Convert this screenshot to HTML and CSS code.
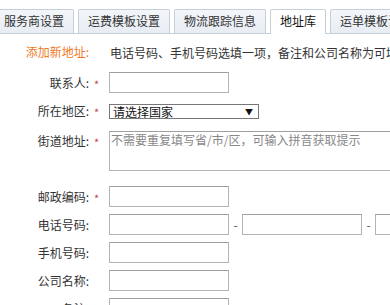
FILE: index.html
```html
<html>

  <head>
    <meta charset="utf-8">
    <link rel="stylesheet" href="styles.css">
  </head>

  <body>

  <div class="tabs">
    <div class="tab">服务商设置</div>
    <div class="tab">运费模板设置</div>
    <div class="tab">物流跟踪信息</div>
    <div class="tab active">地址库</div>
    <div class="tab">运单模板设置</div>
  </div>

  <div class="form">
    <div class="row head">
      <div class="label title">添加新地址:</div>
      <div class="star"></div>
      <div class="hint">电话号码、手机号码选填一项，备注和公司名称为可填项</div>
    </div>

    <div class="row">
      <div class="label">联系人:</div>
      <div class="star">*</div>
      <input class="text" type="text">
    </div>

    <div class="row region">
      <div class="label">所在地区:</div>
      <div class="star">*</div>
      <div class="select-wrap">
        <select class="country">
          <option>请选择国家</option>
        </select>
        <span class="arrow">▼</span>
      </div>
    </div>

    <div class="row street">
      <div class="label">街道地址:</div>
      <div class="star">*</div>
      <textarea class="area" placeholder="不需要重复填写省/市/区，可输入拼音获取提示"></textarea>
    </div>

    <div class="row postal">
      <div class="label">邮政编码:</div>
      <div class="star">*</div>
      <input class="text" type="text">
    </div>

    <div class="row">
      <div class="label">电话号码:</div>
      <div class="star"></div>
      <input class="text" type="text">
      <span class="dash">-</span>
      <input class="text" type="text">
      <span class="dash">-</span>
      <input class="text" type="text">
    </div>

    <div class="row">
      <div class="label">手机号码:</div>
      <div class="star"></div>
      <input class="text" type="text">
    </div>

    <div class="row">
      <div class="label">公司名称:</div>
      <div class="star"></div>
      <input class="text" type="text">
    </div>

    <div class="row">
      <div class="label">备注:</div>
      <div class="star"></div>
      <input class="text" type="text">
    </div>
  </div>

  </body>

</html>
```

FILE: styles.css
```css
  html, body {
    margin: 0;
    overflow: hidden;
    background-color: white;
  }

  body {
    font-family: "Noto Sans CJK SC", "Noto Sans", sans-serif;
    font-size: 12px;
    color: #333;
  }

  .tabs {
    display: flex;
    gap: 4px;
    margin: 9px 0 0 -6px;
    height: 24px;
    border-bottom: 1px solid #c6ced8;
    white-space: nowrap;
  }

  .tab {
    flex: none;
    height: 23px;
    line-height: 22px;
    padding: 0 9px;
    border: 1px solid #c6ced8;
    border-bottom: none;
    border-radius: 2px 2px 0 0;
    background-color: #edf2f7;
    background-image: linear-gradient(#f3f6fa, #e7edf4);
    color: #333;
  }

  .tab.active {
    height: 24px;
    background-color: white;
    background-image: none;
    color: #111;
  }

  .form {
    display: flex;
    flex-direction: column;
  }

  .row {
    display: flex;
    align-items: center;
    margin-top: 7px;
    white-space: nowrap;
  }

  .row.head {
    height: 18px;
    margin-top: 9px;
  }

  .row.head + .row {
    margin-top: 11px;
  }

  .row.region {
    margin-top: 9px;
  }

  .row.street {
    align-items: flex-start;
    margin-top: 11px;
  }

  .row.street .label {
    padding-top: 1px;
  }

  .row.postal {
    margin-top: 15px;
  }

  .label {
    flex: none;
    width: 89px;
    text-align: right;
    line-height: 18px;
  }

  .title {
    color: #ee7a1f;
  }

  .star {
    flex: none;
    width: 20px;
    box-sizing: border-box;
    padding: 3px 0 0 5px;
    color: #c0464b;
    font-size: 11px;
    line-height: 15px;
  }

  .row.street .star {
    padding-top: 4px;
  }

  .hint {
    padding-left: 1px;
    color: #333;
  }

  .text {
    flex: none;
    width: 120px;
    height: 21px;
    box-sizing: border-box;
    margin: 0;
    padding: 0 3px;
    border: 1px solid #b4b4b4;
    border-top-color: #a0a0a0;
    background-color: white;
    font: inherit;
  }

  .dash {
    flex: none;
    width: 13px;
    text-align: center;
    color: #555;
  }

  .select-wrap {
    position: relative;
    flex: none;
  }

  .country {
    display: block;
    width: 150px;
    height: 15px;
    box-sizing: border-box;
    margin: 0;
    padding: 0 0 0 3px;
    border: 1px solid #777;
    border-radius: 0;
    background-color: white;
    font: inherit;
    line-height: 13px;
    color: #111;
    appearance: none;
    -webkit-appearance: none;
  }

  .arrow {
    position: absolute;
    right: 6px;
    top: 1px;
    font-size: 8px;
    line-height: 13px;
    color: #111;
  }

  .area {
    flex: none;
    width: 300px;
    height: 40px;
    box-sizing: border-box;
    margin: 0;
    padding: 0 1px;
    border: 1px solid #b4b4b4;
    border-top-color: #a0a0a0;
    font: inherit;
    line-height: 16px;
    resize: none;
  }

  .area::placeholder {
    color: #888;
  }
```
